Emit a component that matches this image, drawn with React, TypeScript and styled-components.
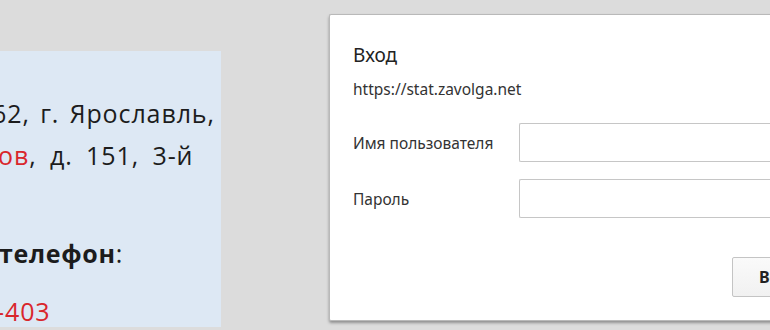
import React from "react";
import styled, { createGlobalStyle } from "styled-components";

const GlobalStyle = createGlobalStyle`
  html, body {
    margin: 0;
    padding: 0;
    background: #dcdcdc;
    overflow: hidden;
  }
`;

const Page = styled.div`
  width: 770px;
  height: 330px;
  display: flex;
  align-items: flex-start;
  overflow: hidden;
`;

const InfoPanel = styled.div`
  flex: 0 0 221px;
  height: 276px;
  margin-top: 51px;
  background: #dde8f4;
  overflow: hidden;
  font-family: "Open Sans", "Noto Sans", sans-serif;
  font-size: 25px;
  letter-spacing: 0.9px;
  color: #1c1c1c;
  padding-top: 41px;
  box-sizing: border-box;
`;

const Line = styled.div<{ $indent: number; $gap?: number; $spread?: number }>`
  white-space: nowrap;
  line-height: 42px;
  margin-left: ${(p) => p.$indent}px;
  margin-top: ${(p) => p.$gap ?? 0}px;
  word-spacing: ${(p) => p.$spread ?? 0}px;
`;

const Red = styled.span`
  color: #d9262c;
`;

const Bold = styled.b`
  font-weight: 700;
  letter-spacing: 0.7px;
`;

const Dialog = styled.div`
  flex: 1;
  margin: 14px 0 0 108px;
  height: 307px;
  background: #fff;
  border: 1px solid #b9b9b9;
  border-right: none;
  border-radius: 2px 0 0 2px;
  box-shadow: 0 2px 3px rgba(0, 0, 0, 0.35);
  box-sizing: border-box;
  padding: 27px 0 0 23px;
  font-family: "Noto Sans", "Open Sans", sans-serif;
  color: #222;
  display: flex;
  flex-direction: column;
`;

const Title = styled.div`
  font-size: 19px;
  line-height: 26px;
`;

const Origin = styled.div`
  font-size: 15.5px;
  line-height: 20px;
  margin-top: 11px;
  color: #333;
`;

const Form = styled.div`
  display: grid;
  grid-template-columns: 166px 1fr;
  row-gap: 17px;
  align-items: center;
  margin-top: 24px;
`;

const Label = styled.label`
  font-size: 15.5px;
  color: #333;
`;

const Input = styled.input`
  height: 39px;
  box-sizing: border-box;
  border: 1px solid #c6c6c6;
  border-right: none;
  border-radius: 2px 0 0 2px;
  background: #fff;
  outline: none;
`;

const Actions = styled.div`
  display: flex;
  justify-content: flex-start;
  padding-left: 379px;
  margin-top: 39px;
`;

const Button = styled.button`
  height: 40px;
  min-width: 100px;
  box-sizing: border-box;
  border: 1px solid #c4c4c4;
  border-radius: 2px;
  background: linear-gradient(#fafafa, #f1f1f1);
  font-family: "Noto Sans", "Open Sans", sans-serif;
  font-weight: 700;
  font-size: 16px;
  color: #222;
  text-align: left;
  padding-left: 26px;
`;

export default function App() {
  return (
    <>
      <GlobalStyle />
      <Page>
        <InfoPanel>
          <Line $indent={-8} $spread={3}>
            62, г. Ярославль,
          </Line>
          <Line $indent={-2} $spread={6}>
            <Red>ов</Red>, д. 151, 3-й
          </Line>
          <Line $indent={-1} $gap={56}>
            <Bold>телефон</Bold>:
          </Line>
          <Line $indent={-4} $gap={16}>
            <Red>-403</Red>
          </Line>
        </InfoPanel>
        <Dialog>
          <Title>Вход</Title>
          <Origin>https://stat.zavolga.net</Origin>
          <Form>
            <Label htmlFor="user">Имя пользователя</Label>
            <Input id="user" type="text" />
            <Label htmlFor="pass">Пароль</Label>
            <Input id="pass" type="password" />
          </Form>
          <Actions>
            <Button>Войти</Button>
          </Actions>
        </Dialog>
      </Page>
    </>
  );
}
